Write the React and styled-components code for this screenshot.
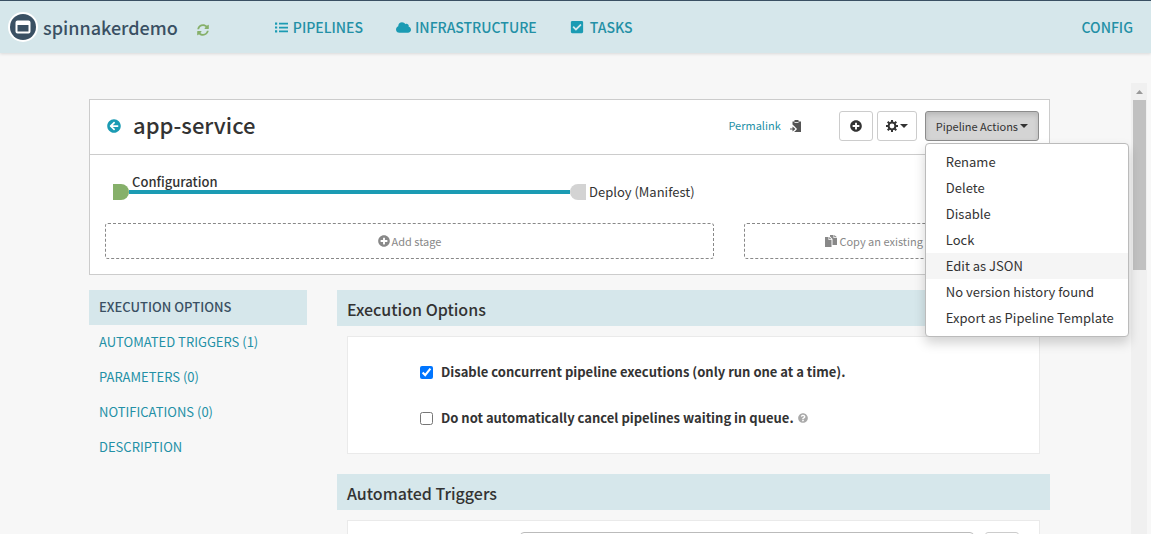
import React from "react";
import styled, { createGlobalStyle } from "styled-components";
import {
  FaArrowCircleLeft,
  FaCheckSquare,
  FaCloud,
  FaPlusCircle,
  FaQuestionCircle,
} from "react-icons/fa";

const teal = "#1b9bb3";
const linkTeal = "#2390a6";
const pale = "#d6e7eb";
const slate = "#3a5063";
const ink = "#333333";

const GlobalStyle = createGlobalStyle`
  *, *::before, *::after { box-sizing: border-box; }
  body {
    margin: 0;
    background: #f7f7f7;
    color: ${ink};
    font-family: "Noto Sans CJK SC", "Open Sans", sans-serif;
    font-size: 13px;
    line-height: 20px;
  }
  h1, h2, p, ul { margin: 0; padding: 0; }
  ul { list-style: none; }
  button, select, input { font: inherit; color: inherit; margin: 0; }
  a { color: ${linkTeal}; text-decoration: none; }
  svg { display: block; flex: none; }
`;

const Page = styled.div`
  display: flex;
  flex-direction: column;
  height: 100vh;
  overflow: hidden;
`;

const TopBar = styled.header`
  display: flex;
  align-items: center;
  flex: none;
  height: 53px;
  padding: 0 18px 0 8px;
  background: ${pale};
  border-top: 1px solid ${slate};
  box-shadow: 0 1px 3px rgba(0, 0, 0, 0.12);
`;

const Brand = styled.a`
  display: flex;
  align-items: center;
  gap: 5px;
  color: ${slate};
  font-size: 18px;
  font-weight: 500;
`;

const RefreshButton = styled.button`
  margin: 5px 66px 0 19px;
  padding: 0;
  border: 0;
  background: none;
  color: #86b06a;
`;

const Nav = styled.nav`
  display: flex;
  flex: 1;
  gap: 33px;
`;

const NavLink = styled.a`
  display: flex;
  align-items: center;
  gap: ${(p) => p.$gap || 4}px;
  font-size: 14px;
  font-weight: 500;
  svg { color: ${teal}; }
  &:last-child { margin-left: ${(p) => (p.$end ? "auto" : "0")}; }
`;

const Body = styled.div`
  display: flex;
  flex: 1;
  min-height: 0;
  margin: 30px 4px 0 0;
`;

const Main = styled.main`
  flex: 1;
  min-width: 0;
  padding: 16px 81px 0 89px;
`;

const ScrollTrack = styled.div`
  display: flex;
  flex-direction: column;
  align-items: center;
  flex: none;
  width: 16px;
  background: #f0f0f0;
`;

const ScrollArrow = styled.div`
  display: flex;
  align-items: center;
  justify-content: center;
  height: 17px;
`;

const ScrollThumb = styled.div`
  width: 13px;
  height: 170px;
  background: #c1c1c1;
`;

const Card = styled.section`
  background: #fff;
  border: 1px solid #ccc;
`;

const CardHeader = styled.div`
  display: flex;
  align-items: center;
  height: 55px;
  padding: 0 10px 2px 17px;
  border-bottom: 1px solid #ccc;
`;

const BackLink = styled.a`
  color: ${teal};
`;

const Title = styled.h1`
  flex: 1;
  padding: 0 0 4px 12px;
  font-size: 22px;
  font-weight: 500;
  line-height: 30px;
`;

const Permalink = styled.a`
  padding-bottom: 2px;
  font-size: 11px;
`;

const IconButton = styled.button`
  margin: 0 38px 0 9px;
  padding: 0;
  border: 0;
  background: none;
  color: #555;
`;

const Actions = styled.div`
  display: flex;
`;

const ToolButton = styled.button`
  display: flex;
  align-items: center;
  justify-content: center;
  gap: 2px;
  height: 30px;
  padding: 0 ${(p) => p.$pad}px 1px;
  border: 1px solid ${(p) => (p.$active ? "#8c8c8c" : "#ccc")};
  border-radius: 3px;
  background: ${(p) => (p.$active ? "#d4d4d4" : "#fff")};
  box-shadow: ${(p) => (p.$active ? "inset 0 3px 5px rgba(0, 0, 0, 0.125)" : "none")};
  font-size: 11px;
  white-space: nowrap;
`;

const MenuAnchor = styled.div`
  position: relative;
  margin-left: ${(p) => p.$space}px;
`;

const Menu = styled.ul`
  position: absolute;
  z-index: 10;
  top: calc(100% + 2px);
  left: 0;
  padding: 5px 0;
  width: 204px;
  background: #fff;
  border: 1px solid #bbb;
  border-radius: 4px;
  box-shadow: 0 6px 12px rgba(0, 0, 0, 0.175);
`;

const MenuItem = styled.a`
  display: block;
  padding: 3px 20px;
  color: ${ink};
  white-space: nowrap;
  background: ${(p) => (p.$hover ? "#f5f5f5" : "transparent")};
`;

const Graph = styled.div`
  display: flex;
  align-items: center;
  height: 68px;
  padding: 6px 23px 0;
`;

const StageNode = styled.div`
  flex: none;
  width: 16px;
  height: 16px;
  background: ${(p) => (p.$start ? "#86b06a" : "#d3d3d3")};
  border-radius: ${(p) => (p.$start ? "0 8px 8px 0" : "8px 0 0 8px")};
`;

const StageLink = styled.div`
  position: relative;
  flex: 0 1 441px;
  height: 4px;
  background: ${teal};
`;

const StageLabel = styled.span`
  position: absolute;
  left: 3px;
  bottom: 2px;
  font-weight: 500;
  line-height: 20px;
`;

const NextLabel = styled.span`
  padding-left: 3px;
`;

const StageButtons = styled.div`
  display: grid;
  grid-template-columns: 21fr 10fr;
  gap: 30px;
  padding: 0 15px 15px;
`;

const DashedButton = styled.button`
  display: flex;
  align-items: center;
  justify-content: center;
  gap: 2px;
  height: 36px;
  padding: 0 0 1px;
  border: 1px dashed #888;
  border-radius: 3px;
  background: #fff;
  color: #888;
  font-size: 11px;
  white-space: nowrap;
`;

const Columns = styled.div`
  display: flex;
  gap: 30px;
  padding-top: 15px;
`;

const SideNav = styled.nav`
  flex: none;
  width: 218px;
`;

const SideLink = styled.a`
  display: block;
  padding: 0 10px 2px;
  line-height: 33px;
  background: ${(p) => (p.$active ? pale : "transparent")};
  color: ${(p) => (p.$active ? slate : linkTeal)};
  font-weight: ${(p) => (p.$active ? 500 : 400)};
`;

const Sections = styled.div`
  flex: 1;
  min-width: 0;
`;

const SectionTitle = styled.h2`
  padding: 2px 10px 0;
  background: ${pale};
  font-size: 16px;
  font-weight: 500;
  line-height: 34px;
`;

const SectionBody = styled.div`
  margin: 10px 10px 20px;
  padding: 22px 72px;
  background: #fff;
  border: 1px solid #eaeaea;
`;

const CheckRow = styled.div`
  display: flex;
  align-items: center;
  height: 26px;
  & + & { margin-top: 20px; }
`;

const Check = styled.input`
  width: 13px;
  height: 13px;
`;

const CheckLabel = styled.label`
  padding: 0 4px 0 8px;
  font-size: 13px;
  font-weight: 700;
`;

const TriggerBody = styled(SectionBody)`
  display: flex;
  gap: 11px;
  padding: 11px 20px 30px 172px;
`;

const TriggerSelect = styled.select`
  flex: 1;
  height: 32px;
  border: 1px solid #bbb;
  border-radius: 4px;
  background: #fff;
`;

const Logo = () => (
  <svg width="30" height="30" viewBox="0 0 30 30" aria-hidden="true">
    <circle cx="15" cy="15" r="15" fill="#fff" />
    <circle cx="15" cy="15" r="13" fill={slate} />
    <rect x="8.500" y="9.500" width="13" height="11" rx="1" fill={slate} stroke="#fff" strokeWidth="2" />
    <path d="M8 9h14v4H8z" fill="#fff" />
  </svg>
);

const RefreshIcon = () => (
  <svg width="12" height="12" viewBox="0 0 512 512" fill="currentColor" aria-hidden="true">
    <path d="M370.700 133.300C339.500 104 298.900 88 255.800 88c-77.500.1-144.300 53.200-162.800 126.900-1.300 5.400-6.100 9.100-11.700 9.100H24.100c-7.500 0-13.200-6.800-11.800-14.200C33.900 94.900 134.800 8 256 8c66.400 0 126.800 26.100 171.300 68.700L463 41c15.100-15.100 41-4.400 41 17v134c0 13.300-10.700 24-24 24H346c-21.400 0-32.100-25.900-17-41l41.700-41.700zM32 296h134c21.400 0 32.100 25.900 17 41l-41.700 41.800c31.300 29.300 71.800 45.300 114.900 45.300 77.400-.1 144.300-53.100 162.800-126.800 1.300-5.400 6.100-9.100 11.700-9.100h57.300c7.500 0 13.200 6.800 11.800 14.200C478.100 417.100 377.200 504 256 504c-66.400 0-126.800-26.100-171.300-68.700L49 471c-15.100 15.100-41 4.400-41-17V320c0-13.300 10.700-24 24-24z" />
  </svg>
);

const ListIcon = () => (
  <svg width="13" height="11" viewBox="0 0 13 11" fill="currentColor" aria-hidden="true">
    <path d="M0 .5h2.200v2.200H0zM4 .8h9v1.700H4zM0 4.400h2.200v2.200H0zM4 4.700h9v1.700H4zM0 8.300h2.200v2.200H0zM4 8.600h9v1.700H4z" />
  </svg>
);

const CaretIcon = () => (
  <svg width="8" height="4" viewBox="0 0 8 4" fill="currentColor" aria-hidden="true">
    <path d="M0 0h8L4 4z" />
  </svg>
);

const CogIcon = () => (
  <svg width="12" height="12" viewBox="0 0 12 12" aria-hidden="true">
    <circle cx="6" cy="6" r="3.400" fill="none" stroke="currentColor" strokeWidth="2" />
    <path
      d="M6 0v2.500M6 9.500V12M0 6h2.500M9.500 6H12M1.700 1.700l1.800 1.800M8.500 8.500l1.800 1.800M1.700 10.300l1.800-1.800M8.500 3.500l1.800-1.800"
      stroke="currentColor"
      strokeWidth="2"
    />
  </svg>
);

const ClipboardIcon = () => (
  <svg width="11" height="12" viewBox="0 0 11 12" aria-hidden="true">
    <path d="M2.500 1.500H4.500V0h4v1.500H11V12H4l3-3-4.500-4.500z" fill="currentColor" />
    <path d="M4.500 2.500h4" stroke="#fff" strokeWidth="0.800" />
    <path d="M0 8.500h2.500V6.500L5.500 9l-3 2.500V9.500H0z" fill="currentColor" />
    <path d="M3 5.500l3.200 3.500L4 11.500" stroke="#fff" strokeWidth="0.800" fill="none" />
  </svg>
);

const CopyIcon = () => (
  <svg width="12" height="12" viewBox="0 0 12 12" fill="currentColor" aria-hidden="true">
    <path d="M0 2h3.500v3H6.500v7H0zM4.200 2l2.300 2.300H4.200z" />
    <path d="M5 0h3.500v3H12v7H7.500V4L5 1.500zM9.200 0L12 2.300H9.200z" />
  </svg>
);

const menuItems = [
  "Rename",
  "Delete",
  "Disable",
  "Lock",
  "Edit as JSON",
  "No version history found",
  "Export as Pipeline Template",
];

const sideItems = [
  "EXECUTION OPTIONS",
  "AUTOMATED TRIGGERS (1)",
  "PARAMETERS (0)",
  "NOTIFICATIONS (0)",
  "DESCRIPTION",
];

export default function App() {
  return (
    <Page>
      <GlobalStyle />
      <TopBar>
        <Brand href="#app"><Logo />spinnakerdemo</Brand>
        <RefreshButton aria-label="Refresh"><RefreshIcon /></RefreshButton>
        <Nav>
          <NavLink href="#pipelines" $gap={5}><ListIcon />PIPELINES</NavLink>
          <NavLink href="#infrastructure"><FaCloud size={15} />INFRASTRUCTURE</NavLink>
          <NavLink href="#tasks" $gap={6}><FaCheckSquare size={14} />TASKS</NavLink>
          <NavLink href="#config" $end>CONFIG</NavLink>
        </Nav>
      </TopBar>
      <Body>
        <Main>
          <Card>
            <CardHeader>
              <BackLink href="#back" aria-label="Back"><FaArrowCircleLeft size={14} /></BackLink>
              <Title>app-service</Title>
              <Permalink href="#permalink">Permalink</Permalink>
              <IconButton aria-label="Copy link"><ClipboardIcon /></IconButton>
              <Actions>
                <ToolButton $pad={10} aria-label="Add"><FaPlusCircle size={12} /></ToolButton>
                <MenuAnchor $space={4}>
                  <ToolButton $pad={8} aria-label="Settings"><CogIcon /><CaretIcon /></ToolButton>
                </MenuAnchor>
                <MenuAnchor $space={8}>
                  <ToolButton $pad={10} $active aria-expanded="true">Pipeline Actions<CaretIcon /></ToolButton>
                  <Menu>
                    {menuItems.map((item) => (
                      <li key={item}>
                        <MenuItem href="#action" $hover={item === "Edit as JSON"}>{item}</MenuItem>
                      </li>
                    ))}
                  </Menu>
                </MenuAnchor>
              </Actions>
            </CardHeader>
            <Graph>
              <StageNode $start />
              <StageLink><StageLabel>Configuration</StageLabel></StageLink>
              <StageNode />
              <NextLabel>Deploy (Manifest)</NextLabel>
            </Graph>
            <StageButtons>
              <DashedButton><FaPlusCircle size={12} />Add stage</DashedButton>
              <DashedButton><CopyIcon />Copy an existing stage</DashedButton>
            </StageButtons>
          </Card>
          <Columns>
            <SideNav>
              {sideItems.map((item, i) => (
                <SideLink key={item} href="#section" $active={i === 0}>{item}</SideLink>
              ))}
            </SideNav>
            <Sections>
              <SectionTitle>Execution Options</SectionTitle>
              <SectionBody>
                <CheckRow>
                  <Check type="checkbox" id="concurrent" defaultChecked />
                  <CheckLabel htmlFor="concurrent">Disable concurrent pipeline executions (only run one at a time).</CheckLabel>
                </CheckRow>
                <CheckRow>
                  <Check type="checkbox" id="queue" />
                  <CheckLabel htmlFor="queue">Do not automatically cancel pipelines waiting in queue.</CheckLabel>
                  <FaQuestionCircle size={10} color="#aaa" />
                </CheckRow>
              </SectionBody>
              <SectionTitle>Automated Triggers</SectionTitle>
              <TriggerBody>
                <TriggerSelect aria-label="Trigger type" />
                <ToolButton $pad={16} aria-label="Remove trigger" />
              </TriggerBody>
            </Sections>
          </Columns>
        </Main>
        <ScrollTrack>
          <ScrollArrow>
            <svg width="7" height="4" viewBox="0 0 7 4" aria-hidden="true"><path d="M0 4L3.500 0 7 4z" fill="#999" /></svg>
          </ScrollArrow>
          <ScrollThumb />
        </ScrollTrack>
      </Body>
    </Page>
  );
}
